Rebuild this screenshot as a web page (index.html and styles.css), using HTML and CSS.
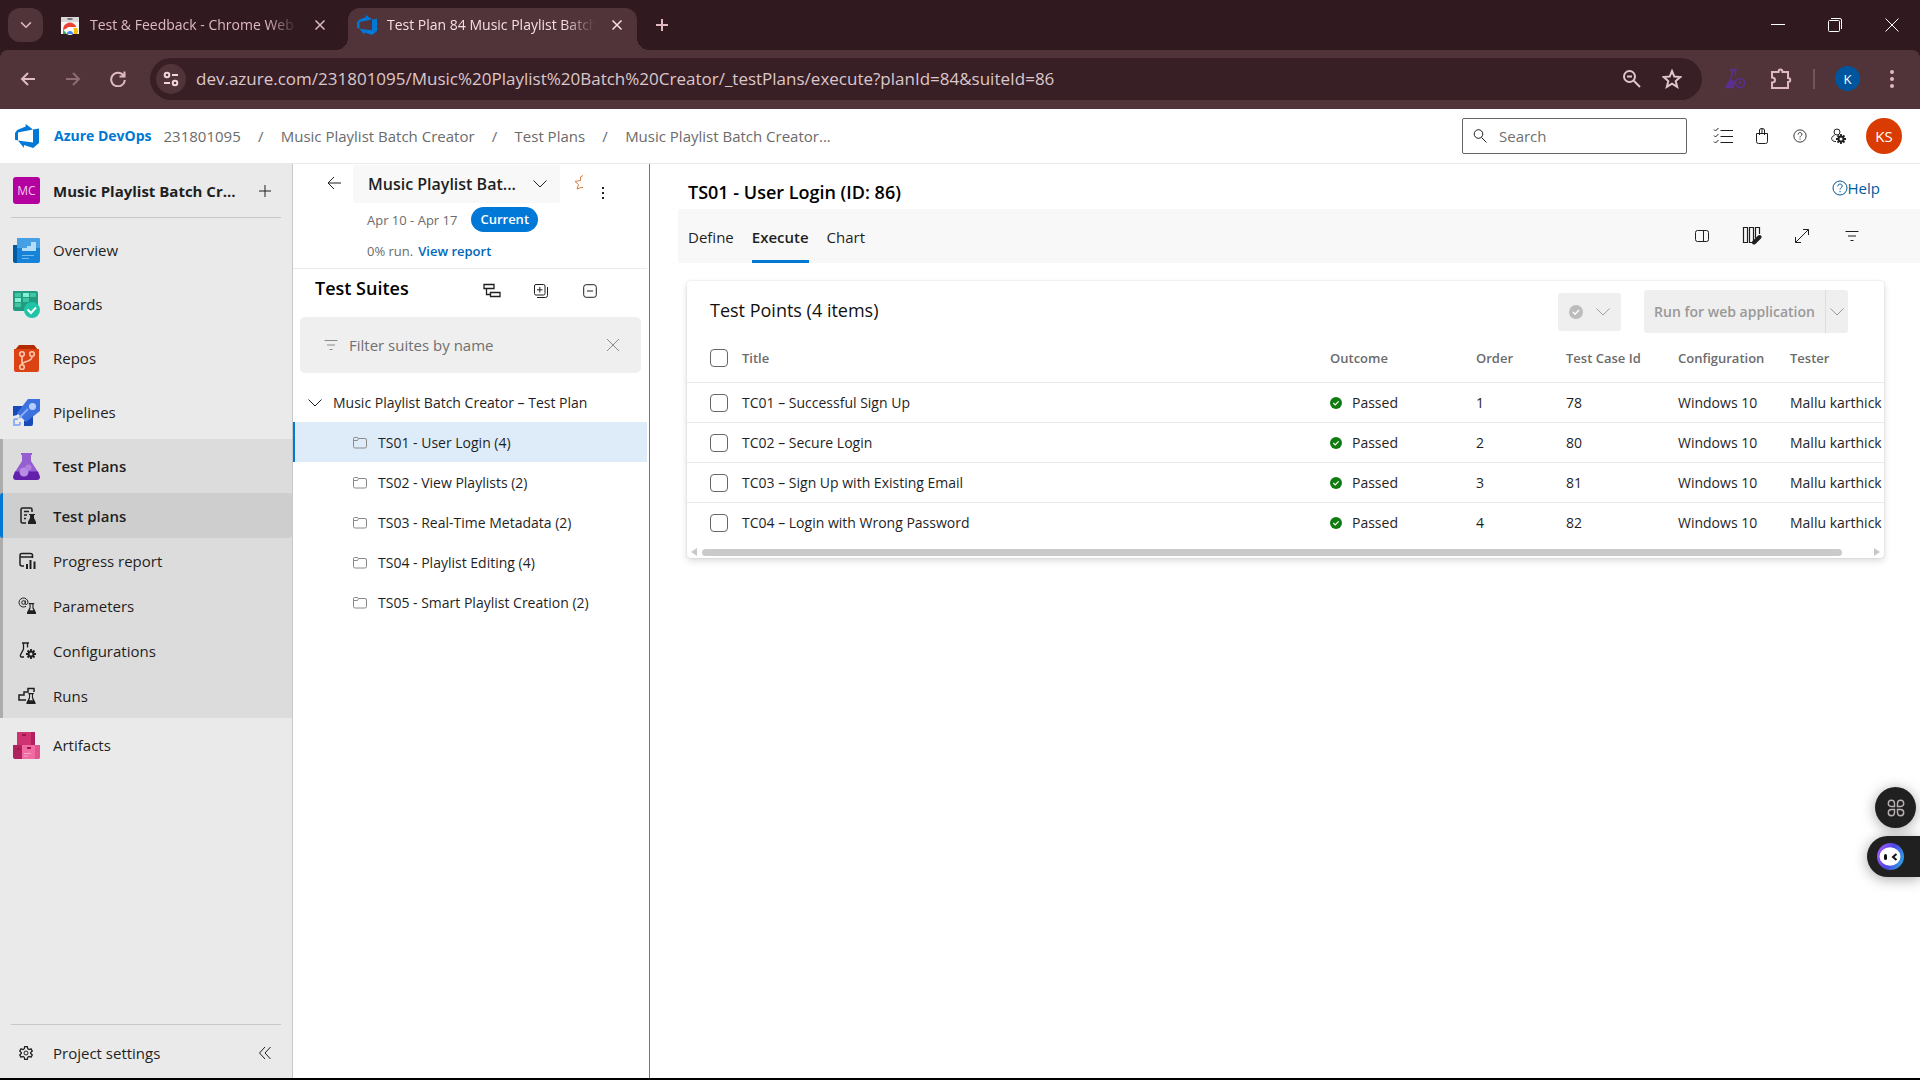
FILE: index.html
```html
<!DOCTYPE html>
<html lang="en">
<head>
<meta charset="utf-8">
<title>Test Plan 84 Music Playlist Batch Creator</title>
<link rel="stylesheet" href="styles.css">
</head>
<body>
<svg class="defs" aria-hidden="true">
  <symbol id="devops" viewBox="0 0 24 24"><path fill="#0078d7" stroke="none" d="M0 8.900l2.200-3 8.500-3.400V0l7.300 5.400L3 8.400v8.200l-3-.9zM24 4.400v14.700L18.200 24l-9.300-3v3l-5.900-7.400 15 1.800v-13z"/></symbol>
  <symbol id="chevron" viewBox="0 0 16 16"><path d="M1.500 4.500 8 11l6.500-6.500"/></symbol>
  <symbol id="close" viewBox="0 0 16 16"><path d="M2 2l12 12M14 2 2 14"/></symbol>
  <symbol id="plus" viewBox="0 0 16 16"><path d="M8 2v12M2 8h12"/></symbol>
  <symbol id="back" viewBox="0 0 16 16"><path d="M15 8H2M8 2 2 8l6 6"/></symbol>
  <symbol id="filter" viewBox="0 0 16 16"><path d="M1.500 3.500h13M4 8h8M6.500 12.500h3"/></symbol>
  <symbol id="help" viewBox="0 0 16 16"><circle cx="8" cy="8" r="7"/><path d="M5.800 6.300c0-3 4.400-2.900 4.400-.3 0 1.700-2.200 1.800-2.200 3.600M8 11v1.200"/></symbol>
  <symbol id="folder" viewBox="0 0 16 16"><path d="M1.500 5V3.500q0-1 1-1H5q1 0 1.500 1h6.500q1.500 0 1.500 1.500v6.500q0 1.500-1.500 1.500H3q-1.500 0-1.500-1.500zM1.500 5.500h4l1-2"/></symbol>
  <symbol id="passed" viewBox="0 0 16 16"><circle cx="8" cy="8" r="8" fill="currentColor" stroke="none"/><path stroke="#fff" stroke-width="1.600" d="m4.500 8 2.500 2.600 4.500-4.800"/></symbol>
  <symbol id="flask" viewBox="0 0 10 12"><path fill="currentColor" fill-rule="evenodd" stroke="none" d="M2 0h6v1.300H7.200V5L10 10.500V12H0v-1.500L2.800 5V1.300H2zM4 1.300V5.500L3 8h4L6 5.500V1.300z"/></symbol>
  <symbol id="cog" viewBox="0 0 12 12"><circle cx="6" cy="6" r="3" fill="none" stroke-width="2.400"/><path stroke-width="2.200" d="M6 0v2.500M6 9.500V12M0 6h2.500M9.500 6H12M1.800 1.800l1.700 1.700M8.500 8.500l1.700 1.700M1.800 10.200l1.700-1.700M8.500 3.500l1.700-1.700"/></symbol>
</svg>

<div class="chrome">
  <div class="tabstrip">
    <button class="tab-menu" aria-label="Search tabs"><svg class="s12 bold"><use href="#chevron"/></svg></button>
    <div class="tab">
      <svg class="favicon" viewBox="0 0 20 20"><path fill="#f5f5f5" d="M1 2h18v17H1z"/><path fill="#d8d8d8" d="M1 2h18v5H1z"/><path stroke="#555" stroke-width="1.500" stroke-linecap="round" d="M8 4h4"/><path fill="#ea4335" d="M3 15a7 7 0 0 1 13.500-3H10z"/><path fill="#34a853" d="M3 14.500 7 19H3z"/><path fill="#fbbc04" d="M11 19h6.500a7 7 0 0 0-.5-6h-5z"/><circle cx="10" cy="16" r="4" fill="#fff"/><path fill="#4285f4" d="M7 19a3 3 0 1 1 6 0z"/></svg>
      <span class="tab-title">Test &amp; Feedback - Chrome Web Store</span>
      <button class="tab-close" aria-label="Close tab"><svg class="s12 bold"><use href="#close"/></svg></button>
    </div>
    <div class="tab active">
      <svg class="favicon"><use href="#devops"/></svg>
      <span class="tab-title">Test Plan 84 Music Playlist Batch Creator</span>
      <button class="tab-close" aria-label="Close tab"><svg class="s12 bold"><use href="#close"/></svg></button>
    </div>
    <button class="new-tab" aria-label="New tab"><svg class="s16 bold"><use href="#plus"/></svg></button>
    <div class="window-buttons">
      <button aria-label="Minimize"><svg class="s14" viewBox="0 0 14 14"><path d="M0 6.500h14"/></svg></button>
      <button aria-label="Restore"><svg class="s14" viewBox="0 0 14 14"><rect x=".5" y="2.500" width="11" height="11" rx="1"/><path d="M3 .5h9q1.500 0 1.500 1.500v9"/></svg></button>
      <button aria-label="Close"><svg class="s14" viewBox="0 0 14 14"><path d="m.5.500 13 13m0-13-13 13"/></svg></button>
    </div>
  </div>
  <div class="toolbar">
    <button class="nav" aria-label="Back"><svg class="s16 bold"><use href="#back"/></svg></button>
    <button class="nav dim" aria-label="Forward"><svg class="s16 bold" viewBox="0 0 16 16"><path d="M1 8h13M8 2l6 6-6 6"/></svg></button>
    <button class="nav" aria-label="Reload"><svg class="s16 bold" viewBox="0 0 16 16"><path d="M13.500 4.500A6.800 6.800 0 1 0 14.800 9M14.500.5V5.500H9.500"/></svg></button>
    <div class="address">
      <button class="site-info" aria-label="Site information"><svg class="s16 bold" viewBox="0 0 16 16"><circle cx="4" cy="4" r="2.300"/><path d="M9 4h6M1 12h6"/><circle cx="12" cy="12" r="2.300"/></svg></button>
      <label class="sr" for="url">Address</label>
      <input id="url" type="text" value="dev.azure.com/231801095/Music%20Playlist%20Batch%20Creator/_testPlans/execute?planId=84&amp;suiteId=86">
      <button class="bar-icon" aria-label="Zoom"><svg class="s20 bold" viewBox="0 0 20 20"><circle cx="7.500" cy="7.500" r="5.500"/><path d="M5 7.500h5M11.800 11.800l6.200 6.200"/></svg></button>
      <button class="bar-icon" aria-label="Bookmark"><svg class="s20 bold" viewBox="0 0 20 20"><path d="m10 2 2.300 5.600 6 .5-4.600 3.900 1.500 5.900L10 14.700l-5.200 3.200L6.300 12 1.700 8.100l6-.5z"/></svg></button>
    </div>
    <button class="ext" aria-label="Test and Feedback"><svg class="s20" viewBox="0 0 20 20"><g fill="none" stroke="#5c2e91" stroke-width="1.500"><path d="M5 .8h7M7 1v6L1 18.500h8M10.500 1v6"/><circle cx="15" cy="14" r="4.600"/><path d="m13.500 15.500 3-3"/></g><path fill="#5c2e91" stroke="none" d="M5 11.500h5l-1 7H1z"/></svg></button>
    <button class="ext" aria-label="Extensions"><svg class="s22 bold" viewBox="0 0 22 22"><path d="M2 4h6.500c0-3.500 4-3.500 4 0H18v6c3 0 3 4 0 4v6H2v-5.500c4 0 4-5 0-5z"/></svg></button>
    <span class="divider"></span>
    <button class="profile" aria-label="Profile">K</button>
    <button class="ext" aria-label="Menu"><svg class="s20" viewBox="0 0 20 20"><g fill="#e0b9c1" stroke="none"><circle cx="10" cy="3" r="2"/><circle cx="10" cy="10" r="2"/><circle cx="10" cy="17" r="2"/></g></svg></button>
  </div>
</div>

<header class="header">
  <a class="brand" href="#"><svg class="logo"><use href="#devops"/></svg>Azure DevOps</a>
  <nav class="crumbs" aria-label="Breadcrumb">
    <a href="#">231801095</a><span class="slash">/</span><a href="#">Music Playlist Batch Creator</a><span class="slash">/</span><a href="#">Test Plans</a><span class="slash">/</span><a href="#">Music Playlist Batch Creator...</a>
  </nav>
  <div class="search">
    <svg class="s14" viewBox="0 0 14 14"><circle cx="5.500" cy="5" r="4.300"/><path d="m8.500 8.500 5 5"/></svg>
    <label class="sr" for="search">Search</label>
    <input id="search" type="text" placeholder="Search">
  </div>
  <div class="header-icons">
    <button aria-label="Work items"><svg class="s20" viewBox="0 0 20 20"><path d="M7.500 4.500H20M7.500 10.500H20M7.500 16.500H20M1 3.500l1.500 1.500L5.500 2M1 9.500 2.500 11l3-3M1 15.500 2.500 17l3-3"/></svg></button>
    <button aria-label="Marketplace"><svg class="s16" viewBox="0 0 16 16"><path d="M2.500 5.500h11v8q0 2-2 2h-7q-2 0-2-2zM5.500 7V2q0-1.500 2.500-1.500T10.500 2v5M8 .5V5"/></svg></button>
    <button aria-label="Help"><svg class="s14"><use href="#help"/></svg></button>
    <button aria-label="User settings"><svg class="s16" viewBox="0 0 16 16"><circle cx="7" cy="4" r="3"/><path d="M6 13.500C1 14 0 8.500 4.500 7.500"/><svg x="6" y="6" width="10" height="10"><use href="#cog"/></svg></svg></button>
    <button class="avatar" aria-label="Account">KS</button>
  </div>
</header>

<div class="app">
  <aside class="sidebar">
    <div class="project"><span class="badge">MC</span><a href="#">Music Playlist Batch Cr...</a><button aria-label="Create"><svg class="s16"><use href="#plus"/></svg></button></div>
    <nav class="menu" aria-label="Project">
      <a class="item" href="#"><svg class="prod" viewBox="0 0 27 27"><path fill="#005ba1" d="M0 8h5v18H2q-2 0-2-2z"/><path fill="#1683d8" d="M4 1h21q2 0 2 2v21q0 2-2 2H4z"/><path fill="#45a0e5" d="M4 1h21q2 0 2 2v8H4z"/><path fill="#b5ddfa" d="M9 11h5V9h4V5h5v9H9z"/><path stroke="#73bcf2" d="M9 18.500h12M9 21.500h7"/></svg>Overview</a>
      <a class="item" href="#"><svg class="prod" viewBox="0 0 27 27"><path fill="#219c81" d="M0 0h23q2 0 2 2v18H2q-2 0-2-2z"/><path fill="#43c4a5" d="M2 2h6v4H2zM17 2h6v4h-6zM10 7h6v4h-6zM2 12h6v4H2z"/><path fill="#83f1d3" d="M10 2h6v4h-6zM2 7h6v4H2z"/><circle cx="19" cy="19" r="8" fill="#1fc4a6"/><path stroke="#fff" stroke-width="2" d="m14.500 18.500 3.500 3.500 5-5.500"/></svg>Boards</a>
      <a class="item" href="#"><svg class="prod" viewBox="0 0 27 27"><path fill="#b32b00" d="M6 0h15l5 6H1z"/><path fill="#db4315" d="M1 4h25v21q0 2-2 2H3q-2 0-2-2z"/><g stroke="#ffc5ad" stroke-width="1.600"><circle cx="9" cy="9" r="2.300"/><circle cx="19" cy="9" r="2.300"/><circle cx="9" cy="22" r="2.300"/><path d="M9 11.500v8.200M19 11.500q0 3-4 4.500-6 1.500-6 4"/></g></svg>Repos</a>
      <a class="item" href="#"><svg class="prod" viewBox="0 0 27 27"><path fill="#174bb9" d="M0 7h10L4 16l-4 1zM11 22l9-6v9q0 2-2 2h-7z"/><path fill="#3b72e0" d="M15 0h12v12L13 23l-9-9z"/><circle cx="19.500" cy="7.500" r="3.500" fill="#b8cdff"/><path stroke="#88abf5" stroke-width="2" d="m6 19 9-9"/><path stroke="#8eb1f7" stroke-width="2" d="M1 20v6h6M1 20h4M7 26v-3"/></svg>Pipelines</a>
      <div class="group">
        <a class="item strong" href="#"><svg class="prod" viewBox="0 0 27 27"><path fill="#955fd2" d="M8 0h11v2h-1v6l7 11H2L9 8V2H8z"/><path fill="#6321ab" d="M2 18.500h23l2 5q0 3.500-3 3.500H3q-3 0-3-3.500z"/><circle cx="11" cy="19" r="4.500" fill="#b88be5"/><circle cx="15.500" cy="14.500" r="3" fill="#b07fe0"/></svg>Test Plans</a>
        <a class="sub current" href="#"><svg class="s18" viewBox="0 0 18 18"><path stroke-width="1.500" d="M8 16H4.500Q3 16 3 14.500v-12Q3 1 4.500 1h8Q14 1 14 2.500V5M6 4.500h5M6 8h3M6 11.500h2"/><svg x="10" y="7" width="8" height="10"><path fill="currentColor" stroke="none" d="M1 0h6v1H6v3l2 4v2H0V8l2-4V1H1z"/></svg></svg>Test plans</a>
        <a class="sub" href="#"><svg class="s18" viewBox="0 0 18 18"><path stroke-width="1.500" d="M6 14H4q-2 0-2-2V3.500q0-2 2-2h8.500q2 0 2 2V6M2 5h12"/><path stroke-width="2" d="M9 17v-5M12.500 17V8M16.500 17V9.500"/></svg>Progress report</a>
        <a class="sub" href="#"><svg class="s18" viewBox="0 0 18 18"><circle cx="5.500" cy="5.500" r="1.800"/><path d="M7.300 3.500v3q0 1.500 1.200 1 1.500-.5 1.500-2.500a4.500 4.500 0 1 0-2 4.300"/><svg x="9" y="6" width="9" height="11"><use href="#flask"/></svg></svg>Parameters</a>
        <a class="sub" href="#"><svg class="s18" viewBox="0 0 18 18"><path stroke-width="1.300" d="M4 1h7M5.500 1v6L2.500 13q-.5 2 1 2H6M9.500 1v4.500"/><svg x="8" y="7" width="10" height="10"><use href="#cog"/></svg></svg>Configurations</a>
        <a class="sub" href="#"><svg class="s18" viewBox="0 0 18 18"><path stroke-width="1.500" d="M8 13H1V8h5V5h4V1.500h6V5"/><svg x="8" y="6" width="10" height="11"><use href="#flask"/></svg></svg>Runs</a>
      </div>
      <a class="item" href="#"><svg class="prod" viewBox="0 0 27 27"><path fill="#cf3270" d="M4 0h18v14H4z"/><path fill="#b0215e" d="M18 0h4v14h-4zM0 13h9v14H2q-2 0-2-2z"/><path fill="#ef6ba2" d="M9 13h18v12q0 2-2 2H9z"/><path fill="#e1538f" d="M22 13h5v12q0 2-2 2h-3z"/><path fill="#9c1650" d="M9 2h4v2H9zM4 16h3v2H4zM14 15h4v2h-4z"/><path stroke="#f9a3c6" d="M11 21.500h7M11 24h4"/></svg>Artifacts</a>
    </nav>
    <div class="settings"><a href="#"><svg class="s14" viewBox="0 0 14 14"><circle cx="7" cy="7" r="2"/><path stroke-width="1.300" d="M5.700.7h2.600l.4 2 1.300.8 2-.7 1.300 2.300L11.700 6.500v1l1.600 1.400L12 11.200l-2-.7-1.300.8-.4 2H5.700l-.4-2-1.300-.8-2 .7L.7 8.900l1.600-1.400v-1L.7 5.100 2 2.800l2 .7 1.300-.8z"/></svg>Project settings</a><button aria-label="Collapse"><svg class="s14" viewBox="0 0 14 14"><path d="M7 1 1.500 7 7 13M12.500 1 7 7l5.500 6"/></svg></button></div>
  </aside>

  <section class="suites">
    <div class="plan">
      <button class="plan-back" aria-label="Back"><svg class="s16"><use href="#back"/></svg></button>
      <div class="plan-info">
        <div class="plan-row">
          <button class="plan-picker">Music Playlist Bat...<svg class="s16"><use href="#chevron"/></svg></button>
          <button class="star" aria-label="Favorite"><svg viewBox="0 0 9 16"><path stroke="#d67f3c" d="M9 1.500 6.500 3v3.500L1 7.500l3.500 3L3 15l4-1.500h2"/></svg></button>
          <button class="more" aria-label="More"><svg viewBox="0 0 4 14"><path stroke="none" fill="#222" d="M1 1h2v2H1zM1 6h2v2H1zM1 11h2v2H1z"/></svg></button>
        </div>
        <div class="dates">Apr 10 - Apr 17<span class="pill">Current</span></div>
        <div class="progress">0% run. <a href="#">View report</a></div>
      </div>
    </div>
    <div class="suites-head">
      <h2>Test Suites</h2>
      <button aria-label="New suite"><svg class="s18" viewBox="0 0 18 18"><path stroke-width="1.300" d="M1 2.500h10v4H1zM7.500 10.500H17v4H7.500zM3.500 6.500v6h4"/></svg></button>
      <button aria-label="Expand all"><svg class="s16" viewBox="0 0 16 16"><rect x="1.500" y="1.500" width="10.500" height="10.500" rx="1.500"/><path d="M4 6.800h5.500M6.800 4v5.500M14.500 4v8.500q0 2-2 2H4"/></svg></button>
      <button aria-label="Collapse all"><svg class="s14" viewBox="0 0 14 14"><rect x=".7" y=".7" width="12.600" height="12.600" rx="2.500"/><path d="M4 7h6"/></svg></button>
    </div>
    <div class="filter">
      <svg class="s16"><use href="#filter"/></svg>
      <label class="sr" for="filter">Filter suites by name</label>
      <input id="filter" type="text" placeholder="Filter suites by name">
      <button aria-label="Clear"><svg class="s16"><use href="#close"/></svg></button>
    </div>
    <div class="root"><svg class="s16"><use href="#chevron"/></svg>Music Playlist Batch Creator – Test Plan</div>
    <ul class="tree">
      <li class="selected"><a href="#"><svg class="s16"><use href="#folder"/></svg>TS01 - User Login (4)</a></li>
      <li><a href="#"><svg class="s16"><use href="#folder"/></svg>TS02 - View Playlists (2)</a></li>
      <li><a href="#"><svg class="s16"><use href="#folder"/></svg>TS03 - Real-Time Metadata (2)</a></li>
      <li><a href="#"><svg class="s16"><use href="#folder"/></svg>TS04 - Playlist Editing (4)</a></li>
      <li><a href="#"><svg class="s16"><use href="#folder"/></svg>TS05 - Smart Playlist Creation (2)</a></li>
    </ul>
  </section>

  <main class="main">
    <div class="title-row"><h1>TS01 - User Login (ID: 86)</h1><a href="#"><svg class="s16"><use href="#help"/></svg>Help</a></div>
    <div class="tabbar">
      <a href="#">Define</a><a class="on" href="#">Execute</a><a href="#">Chart</a>
      <div class="tools">
        <button aria-label="Details pane"><svg class="s16" viewBox="0 0 16 16"><rect x="1.500" y="2.500" width="13" height="11" rx="2"/><path d="M9.500 2.500v11"/></svg></button>
        <button aria-label="Column options"><svg class="s20" viewBox="0 0 20 20"><path stroke-width="1.200" d="M1.500 1.500h4v15h-4zM7.500 1.500h4v15h-4zM17.500 8V1.500h-4V12"/><path stroke-width="4" stroke-linecap="round" d="m12 16.500 5.500-5.500"/></svg></button>
        <button aria-label="Full screen"><svg class="s16" viewBox="0 0 16 16"><path d="m1.500 14.500 13-13M9 1.500h5.500V7M1.500 9v5.500H7"/></svg></button>
        <button aria-label="Filter"><svg class="s16"><use href="#filter"/></svg></button>
      </div>
    </div>
    <div class="card">
      <div class="card-head">
        <h2>Test Points (4 items)</h2>
        <button class="mark" disabled aria-label="Mark outcome"><svg class="s14"><use href="#passed"/></svg><svg class="s16"><use href="#chevron"/></svg></button>
        <div class="run"><button disabled>Run for web application</button><button class="drop" disabled aria-label="Run options"><svg class="s16"><use href="#chevron"/></svg></button></div>
      </div>
      <table>
        <colgroup><col class="c-check"><col><col class="c-outcome"><col class="c-order"><col class="c-id"><col class="c-config"><col class="c-tester"></colgroup>
        <thead><tr><th><input type="checkbox" aria-label="Select all"></th><th>Title</th><th>Outcome</th><th>Order</th><th>Test Case Id</th><th>Configuration</th><th>Tester</th></tr></thead>
        <tbody>
          <tr><td><input type="checkbox" aria-label="Select TC01"></td><td>TC01 – Successful Sign Up</td><td><span class="pass"><svg class="s12"><use href="#passed"/></svg>Passed</span></td><td>1</td><td>78</td><td>Windows 10</td><td>Mallu karthick</td></tr>
          <tr><td><input type="checkbox" aria-label="Select TC02"></td><td>TC02 – Secure Login</td><td><span class="pass"><svg class="s12"><use href="#passed"/></svg>Passed</span></td><td>2</td><td>80</td><td>Windows 10</td><td>Mallu karthick</td></tr>
          <tr><td><input type="checkbox" aria-label="Select TC03"></td><td>TC03 – Sign Up with Existing Email</td><td><span class="pass"><svg class="s12"><use href="#passed"/></svg>Passed</span></td><td>3</td><td>81</td><td>Windows 10</td><td>Mallu karthick</td></tr>
          <tr><td><input type="checkbox" aria-label="Select TC04"></td><td>TC04 – Login with Wrong Password</td><td><span class="pass"><svg class="s12"><use href="#passed"/></svg>Passed</span></td><td>4</td><td>82</td><td>Windows 10</td><td>Mallu karthick</td></tr>
        </tbody>
      </table>
      <div class="hscroll"><span class="arrow left"></span><span class="thumb"></span><span class="arrow right"></span></div>
    </div>
  </main>
</div>

<div class="floaters">
  <button class="float-round" aria-label="Shortcuts"><svg class="s18" viewBox="0 0 18 18"><path stroke="#b8b0b5" stroke-width="1.400" d="M7.500 7.500H4.300a3.100 3.100 0 1 1 3.200-3.200zM10.500 7.500V4.300a3.100 3.100 0 1 1 3.200 3.200zM7.500 10.500v3.200a3.100 3.100 0 1 1-3.200-3.200zM10.500 10.500h3.200a3.100 3.100 0 1 1-3.200 3.200z"/></svg></button>
  <button class="float-pill" aria-label="Assistant"><span class="ring"><svg viewBox="0 0 22 19"><ellipse cx="11" cy="9.500" rx="10.500" ry="9.300" fill="#fff" stroke="none"/><path stroke="#111" stroke-width="3" stroke-linecap="round" d="M6.500 8.500v3"/><path stroke="#111" stroke-width="2" d="m17.500 7-3.500 3 3.500 3"/></svg></span></button>
</div>
</body>
</html>
```
FILE: styles.css
```css
* { box-sizing: border-box; }
body {
  margin: 0;
  min-height: 100vh;
  display: flex;
  flex-direction: column;
  font: 15px/20px "Open Sans", "Noto Sans", sans-serif;
  color: #1f1f1f;
  background: #fff;
  border-bottom: 2px solid #000;
}
button, input { font: inherit; color: inherit; }
button {
  display: inline-flex;
  align-items: center;
  justify-content: center;
  padding: 0;
  border: 0;
  background: none;
  flex: none;
}
a { color: inherit; text-decoration: none; }
h1, h2, ul { margin: 0; padding: 0; }
svg { fill: none; stroke: currentColor; flex: none; }
.defs { position: absolute; width: 0; height: 0; }
.sr { position: absolute; width: 1px; height: 1px; overflow: hidden; white-space: nowrap; clip-path: inset(50%); }
.s12 { width: 12px; height: 12px; }
.s14 { width: 14px; height: 14px; }
.s16 { width: 16px; height: 16px; }
.s18 { width: 18px; height: 18px; }
.s20 { width: 20px; height: 20px; }
.s22 { width: 22px; height: 22px; }
.bold { stroke-width: 2; }

/* Browser frame */
.chrome { background: #301a20; color: #e0b9c1; }
.tabstrip { display: flex; align-items: center; height: 50px; padding-left: 8px; }
.tab-menu { width: 35px; height: 34px; border-radius: 12px; background: #50343a; }
.tab {
  display: flex;
  align-items: center;
  width: 289px;
  height: 42px;
  margin-top: 8px;
  padding: 0 14px 8px 9px;
  border-radius: 12px 12px 0 0;
}
.tab-menu + .tab { margin-left: 8px; }
.tab.active { position: relative; margin-left: 8px; background: #50343a; color: #f6dfe3; }
.tab.active::before, .tab.active::after {
  content: "";
  position: absolute;
  bottom: 0;
  width: 12px;
  height: 12px;
}
.tab.active::before { left: -12px; background: radial-gradient(circle at 0 0, transparent 12px, #50343a 12px); }
.tab.active::after { right: -12px; background: radial-gradient(circle at 100% 0, transparent 12px, #50343a 12px); }
.favicon { width: 20px; height: 20px; margin-right: 10px; }
.favicon, .prod { stroke: none; }
.tab-title {
  flex: 1;
  overflow: hidden;
  white-space: nowrap;
  font-size: 14px;
  -webkit-mask-image: linear-gradient(90deg, #000 85%, transparent);
  mask-image: linear-gradient(90deg, #000 85%, transparent);
}
.tab-close { width: 12px; margin-left: 16px; }
.new-tab { width: 50px; }
.window-buttons { display: flex; margin-left: auto; }
.window-buttons button { width: 57px; height: 50px; color: #fff; }
.toolbar {
  display: flex;
  align-items: center;
  height: 59px;
  padding: 0 14px 2px 5px;
  background: #50343a;
  border-radius: 8px 8px 0 0;
}
.nav { width: 45px; height: 36px; }
.nav.dim { color: #8d6c73; }
.address {
  flex: 1;
  display: flex;
  align-items: center;
  height: 42px;
  margin: 0 19px 0 10px;
  padding: 0 10px 0 6px;
  border-radius: 21px;
  background: #381f25;
}
.site-info { width: 30px; height: 30px; border-radius: 15px; background: #50343a; color: #eed6da; }
.address input {
  flex: 1;
  min-width: 0;
  margin-left: 8px;
  padding: 0 2px;
  border: 0;
  outline: 0;
  background: none;
  color: #dcc7cb;
  font-size: 17px;
}
.bar-icon { width: 40px; color: #ddc5ca; }
.ext { width: 28px; }
.ext + .ext { margin-left: 18px; }
.divider { width: 2px; height: 20px; margin: 0 20px 0 18px; background: #75545b; }
.profile { width: 25px; height: 25px; margin-right: 18px; border-radius: 50%; background: #00569e; color: #fff; font-size: 13px; }

/* Product header */
.header {
  display: flex;
  align-items: center;
  height: 55px;
  padding: 0 18px 0 15px;
  border-bottom: 1px solid #eaeaea;
}
.brand { display: flex; align-items: center; color: #0078d4; font-weight: 700; font-size: 14px; }
.logo { width: 24px; height: 24px; margin-right: 15px; }
.crumbs { display: flex; margin-left: 12px; color: #6b6b6b; white-space: nowrap; }
.slash { width: 40px; text-align: center; }
.search {
  display: flex;
  align-items: center;
  width: 225px;
  height: 36px;
  margin-left: auto;
  padding: 0 10px;
  border: 1px solid #666;
  border-radius: 2px;
}
.search input { width: 100%; margin-left: 10px; border: 0; outline: 0; background: none; }
.search input::placeholder { color: #707070; opacity: 1; }
.header-icons { display: flex; align-items: center; margin-left: 16px; }
.header-icons button { width: 38px; height: 36px; }
.header-icons button:first-child { width: 40px; }
.header-icons .avatar { width: 36px; margin-left: 9px; border-radius: 50%; background: #da3b01; color: #fff; }

.app { flex: 1; display: flex; }

/* Sidebar */
.sidebar {
  display: flex;
  flex-direction: column;
  flex: none;
  width: 293px;
  background: #eaeaea;
  border-right: 1px solid #c8c8c8;
}
.project {
  display: flex;
  align-items: center;
  height: 54px;
  margin: 0 11px;
  padding: 0 8px 0 2px;
  border-bottom: 1px solid #c8c8c8;
  font-weight: 700;
}
.project a { flex: 1; margin-left: 13px; white-space: nowrap; }
.badge {
  width: 27px;
  height: 27px;
  border-radius: 3px;
  background: #b4009e;
  color: #f6c8f0;
  font-size: 12px;
  font-weight: 400;
  line-height: 27px;
  text-align: center;
}
.menu { flex: 1; padding-top: 5px; }
.item, .sub { display: flex; align-items: center; }
.item { height: 54px; padding-left: 13px; }
.prod { width: 27px; height: 27px; margin-right: 13px; }
.group { background: #dcdcdc; border-left: 3px solid #acacac; }
.group .item { padding-left: 10px; }
.strong, .current { font-weight: 600; }
.sub { height: 45px; padding-left: 15px; }
.sub svg.s18 { margin-right: 17px; }
.sub.current { margin-left: -3px; border-left: 3px solid #0078d4; border-radius: 3px; background: #cecece; }
.settings {
  display: flex;
  align-items: center;
  justify-content: space-between;
  height: 54px;
  margin: 0 11px;
  padding: 2px 9px 0 8px;
  border-top: 1px solid #c8c8c8;
}
.settings a { display: flex; align-items: center; gap: 20px; }

/* Suites panel */
.suites { flex: none; width: 357px; border-right: 1px solid #777; padding-right: 2px; }
.plan { display: flex; height: 105px; padding: 1px 0 0 33px; border-bottom: 1px solid #eaeaea; }
.plan-back { width: 16px; height: 36px; }
.plan-info { margin-left: 11px; }
.plan-row { display: flex; height: 42px; }
.plan-picker {
  width: 207px;
  height: 38px;
  padding: 0 12px 0 15px;
  justify-content: space-between;
  border-radius: 2px;
  background: #f8f8f8;
  font-size: 16px;
  font-weight: 600;
}
.star { width: 9px; height: 34px; margin-left: 14px; }
.star svg { width: 9px; height: 16px; }
.more { width: 4px; height: 56px; margin-left: 18px; }
.more svg { width: 4px; height: 14px; }
.dates, .progress { display: flex; align-items: center; margin-left: 14px; color: #6b6b6b; font-size: 13px; }
.dates { height: 25px; }
.pill { margin-left: 14px; padding: 0 9px; border-radius: 13px; background: #0078d7; color: #fff; font-weight: 600; line-height: 25px; }
.progress { gap: 5px; margin-top: 9px; }
.progress a { color: #0067b8; font-weight: 600; }
.suites-head { display: flex; align-items: center; height: 42px; padding: 2px 48px 0 22px; }
h2 { flex: 1; font-size: 18px; line-height: 24px; font-weight: 600; }
.suites-head h2 { padding-bottom: 6px; color: #000; }
.suites-head button { width: 18px; margin-left: 31px; }
.filter {
  display: flex;
  align-items: center;
  height: 56px;
  margin: 6px 6px 10px 7px;
  padding: 0 20px 0 23px;
  border-radius: 5px;
  background: #efefef;
  color: #8b8b8b;
}
.filter input { flex: 1; min-width: 0; margin-left: 8px; border: 0; outline: 0; background: none; }
.filter input::placeholder { color: #707070; opacity: 1; }
.root { display: flex; align-items: center; gap: 10px; height: 39px; padding-left: 14px; font-size: 14px; white-space: nowrap; }
.tree { list-style: none; font-size: 14px; }
.tree a { display: flex; align-items: center; gap: 10px; height: 40px; padding: 1px 0 0 57px; border-left: 2px solid transparent; }
.tree svg { color: #8a8a8a; }
.tree .selected a { background: #deecf9; border-color: #0078d4; }

/* Test points */
.main { flex: 1; min-width: 0; padding-left: 28px; }
.title-row { display: flex; align-items: center; justify-content: space-between; height: 45px; padding: 10px 40px 0 10px; }
h1 { color: #000; font-size: 18px; line-height: 24px; font-weight: 600; }
.title-row a { display: flex; align-items: center; padding-bottom: 8px; color: #005a9e; }
.tabbar { display: flex; gap: 18px; height: 54px; padding: 0 58px 0 10px; background: #f8f8f8; }
.tabbar a { padding-top: 18px; }
.tabbar .on { border-bottom: 3px solid #0078d4; font-weight: 600; }
.tools { display: flex; align-items: center; gap: 30px; margin-left: auto; }
.tools button { width: 20px; }
.card {
  margin: 18px 36px 0 9px;
  border-radius: 4px;
  overflow: hidden;
  box-shadow: 0 3px 7px rgba(0, 0, 0, .14), 0 0 2px rgba(0, 0, 0, .14);
}
.card-head { display: flex; align-items: center; height: 56px; padding: 5px 36px 0 23px; }
.card-head h2 { padding-bottom: 4px; font-weight: 400; color: #111; }
.mark { gap: 12px; width: 63px; height: 38px; margin-right: 23px; border-radius: 3px; background: #efefef; color: #a0a0a0; }
.mark svg:first-child { color: #bcbcbc; }
.run { display: flex; height: 43px; border-radius: 3px; background: #efefef; color: #999; font-weight: 600; font-size: 14px; }
.run button { width: 181px; color: inherit; }
.run .drop { width: 23px; border-left: 1px solid #ddd; }
table { width: 100%; border-collapse: collapse; table-layout: fixed; font-size: 14px; }
.c-check { width: 55px; }
.c-outcome { width: 146px; }
.c-order { width: 90px; }
.c-id { width: 112px; }
.c-config { width: 112px; }
.c-tester { width: 94px; }
th, td { height: 40px; padding: 2px 0 0; text-align: left; font-weight: 400; white-space: nowrap; border-bottom: 1px solid #eaeaea; }
th { height: 45px; padding: 0 0 2px; color: #6b6b6b; font-size: 13px; font-weight: 600; }
tbody tr:last-child td { border: 0; }
th:first-child, td:first-child { padding-left: 23px; }
input[type="checkbox"] {
  display: block;
  appearance: none;
  width: 18px;
  height: 18px;
  margin: 0;
  border: 1px solid #666;
  border-radius: 4px;
  background: #fff;
}
.pass { display: flex; align-items: center; gap: 10px; }
.pass svg { color: #107c10; }
.hscroll { display: flex; align-items: center; height: 16px; padding: 6px 4px 2px; }
.arrow { border: 4px solid transparent; }
.arrow.left { border-right: 6px solid #c8c8c8; border-left: 0; }
.arrow.right { border-left: 6px solid #c8c8c8; border-right: 0; }
.thumb { flex: 1; height: 7px; margin: 0 32px 0 5px; border-radius: 4px; background: #cacaca; }

/* Floating assistants */
.floaters {
  position: fixed;
  right: 0;
  top: 787px;
  display: flex;
  flex-direction: column;
  align-items: flex-end;
  gap: 8px;
}
.floaters button { height: 41px; background: #202020; box-shadow: 0 2px 14px rgba(0, 0, 0, .35); }
.float-round { width: 41px; margin-right: 4px; border-radius: 50%; }
.float-pill { width: 53px; padding-right: 7px; border-radius: 21px 0 0 21px; }
.ring {
  display: flex;
  align-items: center;
  justify-content: center;
  width: 27px;
  height: 27px;
  border-radius: 50%;
  background: linear-gradient(110deg, #b05cff, #4f46e5 50%, #22b8e0);
}
.ring svg { width: 22px; height: 19px; }
```
